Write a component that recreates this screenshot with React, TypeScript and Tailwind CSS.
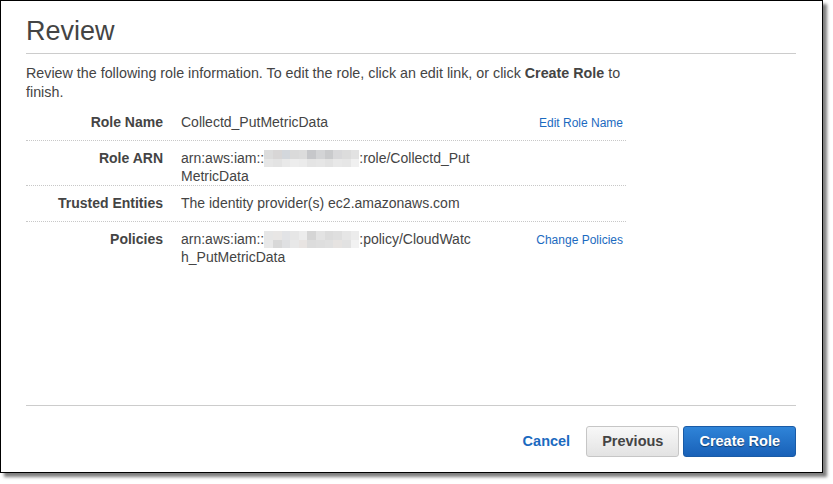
import React from "react";

const font = { fontFamily: '"Liberation Sans", Arial, sans-serif' };

const blurTop = ["#dcdcdc", "#d8d6d6", "#d3d7dc", "#dadada", "#dcdcdc", "#c6c7ca", "#d3d4d6", "#c9cacc", "#d8d8da", "#dcdcdc", "#e2e2e2"];
const blurBot = ["#e6e6e6", "#e3e3e3", "#e9e9e9", "#ededed", "#ebebeb", "#e4e4e4", "#e6e6e6", "#e2e2e2", "#e8e8e8", "#e6e6e6", "#f0f0f0"];
const blurTop2 = ["#e6e6e6", "#e8e6e5", "#e2e3e6", "#e6e6e6", "#ececec", "#d5d5d5", "#e3e3e3", "#dcdcdc", "#dfdfdf", "#e6e6e6", "#ececec"];
const blurBot2 = ["#e8e8e8", "#d8d8d8", "#dfe0e2", "#e8e8e8", "#e8e4e2", "#dcdcdc", "#dedede", "#e0e0e0", "#e6e3e1", "#e2e2e2", "#f2f2f2"];

function Blur({ a, b }: { a: string[]; b: string[] }) {
  return (
    <span className="inline-block overflow-hidden w-[95px] h-[17px] align-[-4px]">
      <span className="grid grid-cols-11 grid-rows-2 w-full h-full">
        {a.map((c, i) => (
          <span key={"a" + i} style={{ backgroundColor: c }} />
        ))}
        {b.map((c, i) => (
          <span key={"b" + i} style={{ backgroundColor: c }} />
        ))}
      </span>
    </span>
  );
}

function Row({
  label,
  children,
  link,
  last,
}: {
  label: string;
  children: React.ReactNode;
  link?: string;
  last?: boolean;
}) {
  return (
    <div
      className={
        "flex pt-[8px] min-h-[36px] text-[14px] leading-[18px] " +
        (last ? "" : "border-b border-dotted border-[#c8c8c8]")
      }
    >
      <div className="w-[137px] shrink-0 text-right font-bold text-[#444]">{label}</div>
      <div className="w-[294px] shrink-0 ml-[18px] text-[#444] break-all">{children}</div>
      <div className="flex-1 text-right pr-[3px]">
        {link && <a className="text-[12px] text-[#1b6ac0] cursor-pointer">{link}</a>}
      </div>
    </div>
  );
}

export default function App() {
  return (
    <div className="bg-white w-[833px] h-[484px]" style={font}>
      <div className="w-[823px] h-[473px] border border-black bg-white shadow-[4px_4px_3px_rgba(0,0,0,0.5)] flex flex-col pl-[25px] pr-[26px]">
        <div className="pt-[13px]">
          <h1 className="text-[27px] leading-[34px] text-[#444] font-normal">Review</h1>
          <div className="mt-[5px] h-px bg-[#cccccc]" />
        </div>
        <div className="w-[600px]">
          <p className="mt-[10px] text-[14.3px] leading-[19px] text-[#444]">
            Review the following role information. To edit the role, click an edit link, or click{" "}
            <b>Create Role</b> to finish.
          </p>
          <div className="mt-[3px]">
            <Row label="Role Name" link="Edit Role Name">
              Collectd_PutMetricData
            </Row>
            <Row label="Role ARN">
              arn:aws:iam::<Blur a={blurTop} b={blurBot} />:role/Collectd_PutMetricData
            </Row>
            <Row label="Trusted Entities">The identity provider(s) ec2.amazonaws.com</Row>
            <Row label="Policies" link="Change Policies" last>
              arn:aws:iam::<Blur a={blurTop2} b={blurBot2} />:policy/CloudWatch_PutMetricData
            </Row>
          </div>
        </div>
        <div className="mt-auto border-t border-[#cccccc] pt-[20px] pb-[15px] flex justify-end items-center">
          <a className="text-[14.5px] font-bold text-[#1b6ac0] cursor-pointer">Cancel</a>
          <button className="ml-[16px] h-[31px] px-[15px] rounded-[3px] border border-[#c6c6c6] bg-gradient-to-b from-[#f8f8f8] to-[#e3e3e3] text-[14.5px] font-bold text-[#444]">
            Previous
          </button>
          <button className="ml-[4px] h-[31px] px-[15px] rounded-[3px] border border-[#1a5ba6] bg-gradient-to-b from-[#2f84d8] to-[#1961b8] text-[14.5px] font-bold text-white [text-shadow:0_1px_1px_rgba(0,0,0,0.45)]">
            Create Role
          </button>
        </div>
      </div>
    </div>
  );
}
